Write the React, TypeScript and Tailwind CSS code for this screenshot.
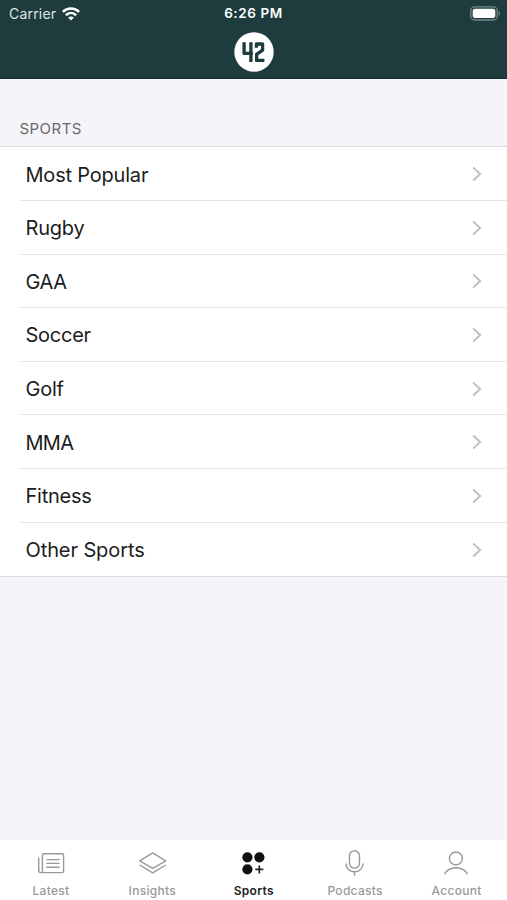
import React from "react";

const rows = [
  { label: "Most Popular", tracking: "tracking-[-0.2px]" },
  { label: "Rugby", tracking: "tracking-[-0.2px]" },
  { label: "GAA", tracking: "tracking-[-0.4px]" },
  { label: "Soccer", tracking: "tracking-[-0.25px]" },
  { label: "Golf", tracking: "tracking-[-0.25px]" },
  { label: "MMA", tracking: "tracking-[-0.7px]" },
  { label: "Fitness", tracking: "tracking-[-0.25px]" },
  { label: "Other Sports", tracking: "tracking-[-0.1px]" },
];

function Wifi() {
  return (
    <svg width="18" height="14" viewBox="0 0 18 14" fill="none" stroke="#fff" strokeWidth="2.6">
      <path d="M0.9 4.9C5.5 0.4 12.5 0.4 17.1 4.9" />
      <path d="M3.9 8.2C6.9 5.3 11.1 5.3 14.1 8.2" />
      <path d="M9 13.5L6.2 10.8C7.8 9.2 10.2 9.2 11.8 10.8Z" fill="#fff" stroke="none" />
    </svg>
  );
}

function Battery() {
  return (
    <svg width="31" height="15" viewBox="0 0 31 15" fill="none">
      <rect x="0.8" y="0.8" width="26.4" height="13.2" rx="3.8" stroke="#718786" strokeWidth="1.3" />
      <rect x="2.7" y="2.7" width="22.6" height="9.4" rx="2" fill="#fff" />
      <path d="M28.6 5C30.5 5.6 30.5 9.2 28.6 9.8Z" fill="#718786" />
    </svg>
  );
}

function Logo() {
  return (
    <svg width="40" height="40" viewBox="0 0 40 40" fill="none">
      <circle cx="20" cy="20" r="19.7" fill="#fff" />
      <g stroke="#1e3c3d" strokeWidth="3.3" strokeLinejoin="round">
        <path d="M10.1 10.3V21.4H18.9M16.9 10.3V30" />
        <path d="M22.4 15.8V12H28.6V18.2L22.6 22.4V28.4H30.4" />
      </g>
    </svg>
  );
}

const icon = { width: 30, height: 30, viewBox: "0 0 30 30", fill: "none", stroke: "#999", strokeWidth: 1.4 };

const tabs = [
  {
    label: "Latest",
    icon: (
      <svg {...icon}>
        <rect x="6.4" y="5.8" width="21.2" height="18.8" rx="1.6" />
        <path d="M6.4 24.6H5.2Q2.7 24.6 2.7 22.2V9.6M10.4 11.6H23.6M10.4 15.4H23.6M10.4 19.2H23.6" />
      </svg>
    ),
  },
  {
    label: "Insights",
    icon: (
      <svg {...icon} strokeLinejoin="round">
        <path d="M15.7 4.9L28.7 12.8L15.7 20.4L2.7 12.8Z" />
        <path d="M2.7 17L15.7 24.8L28.7 17" />
      </svg>
    ),
  },
  {
    label: "Sports",
    icon: (
      <svg {...icon} stroke="none" fill="#111">
        <circle cx="9.4" cy="9.3" r="5.1" />
        <circle cx="21.4" cy="9.3" r="5.1" />
        <circle cx="9.4" cy="21.3" r="5.1" />
        <path d="M17.3 21.4H25.3M21.3 17.4V25.4" stroke="#222" strokeWidth="1.7" />
      </svg>
    ),
  },
  {
    label: "Podcasts",
    icon: (
      <svg {...icon}>
        <rect x="9.5" y="2.8" width="10" height="17.3" rx="5" />
        <path d="M6 15.5C6 26.5 23 26.5 23 15.5M14.5 23.8V27.8" />
      </svg>
    ),
  },
  {
    label: "Account",
    icon: (
      <svg {...icon}>
        <circle cx="14.9" cy="10.5" r="6.5" />
        <path d="M3.4 26.2C8.2 17.5 21.8 17.5 26.6 26.2" />
      </svg>
    ),
  },
];

export default function App() {
  return (
    <div className="flex h-[900px] w-[507px] flex-col overflow-hidden bg-[#f4f4f9] font-['Inter',sans-serif]">
      <header className="h-[79px] shrink-0 border-b border-[#14302f] bg-[#1e3c3d] text-white">
        <div className="grid h-[27px] grid-cols-3 items-center px-[9px]">
          <div className="flex items-center gap-[6px] text-[14px] leading-[27px] text-[#dfe5e5]">
            <span className="tracking-[0.2px]">Carrier</span>
            <Wifi />
          </div>
          <div className="text-center text-[13.5px] leading-[27px] font-semibold tracking-[0.6px]">6:26 PM</div>
          <div className="-mr-[3px] flex justify-end">
            <Battery />
          </div>
        </div>
        <div className="flex justify-center pt-[5px]">
          <Logo />
        </div>
      </header>
      <main className="flex-1">
        <h2 className="h-[67.25px] pt-[40px] pl-[19.5px] text-[15px] leading-[20px] font-normal tracking-[0.45px] text-[#68686c]">SPORTS</h2>
        <ul className="border-y border-[#dedee2] bg-white">
          {rows.map((row, i) => (
            <li key={row.label} className="pl-5">
              <div className={`flex h-[53.625px] items-center justify-between pr-[24px] pl-[5.5px] ${i < rows.length - 1 ? "border-b border-[#e5e5e7]" : ""}`}>
                <span className={`pt-[2px] text-[20px] leading-none text-[#1c1c1c] ${row.tracking}`}>{row.label}</span>
                <svg className="mt-px" width="12" height="18" viewBox="0 0 12 18" fill="none" stroke="#c1c1c4" strokeWidth="2">
                  <path d="M2.2 2.5L9.1 9L2.2 15.5" />
                </svg>
              </div>
            </li>
          ))}
        </ul>
      </main>
      <nav className="grid h-[60px] shrink-0 grid-cols-5 bg-white">
        {tabs.map((tab) => (
          <div key={tab.label} className="flex flex-col items-center pt-[8px]">
            {tab.icon}
            <span className={`mt-[5px] pl-[0.5px] text-[12px] leading-[16px] tracking-[0.3px] ${tab.label === "Sports" ? "font-semibold text-[#222]" : "font-medium text-[#999]"}`}>{tab.label}</span>
          </div>
        ))}
      </nav>
    </div>
  );
}
